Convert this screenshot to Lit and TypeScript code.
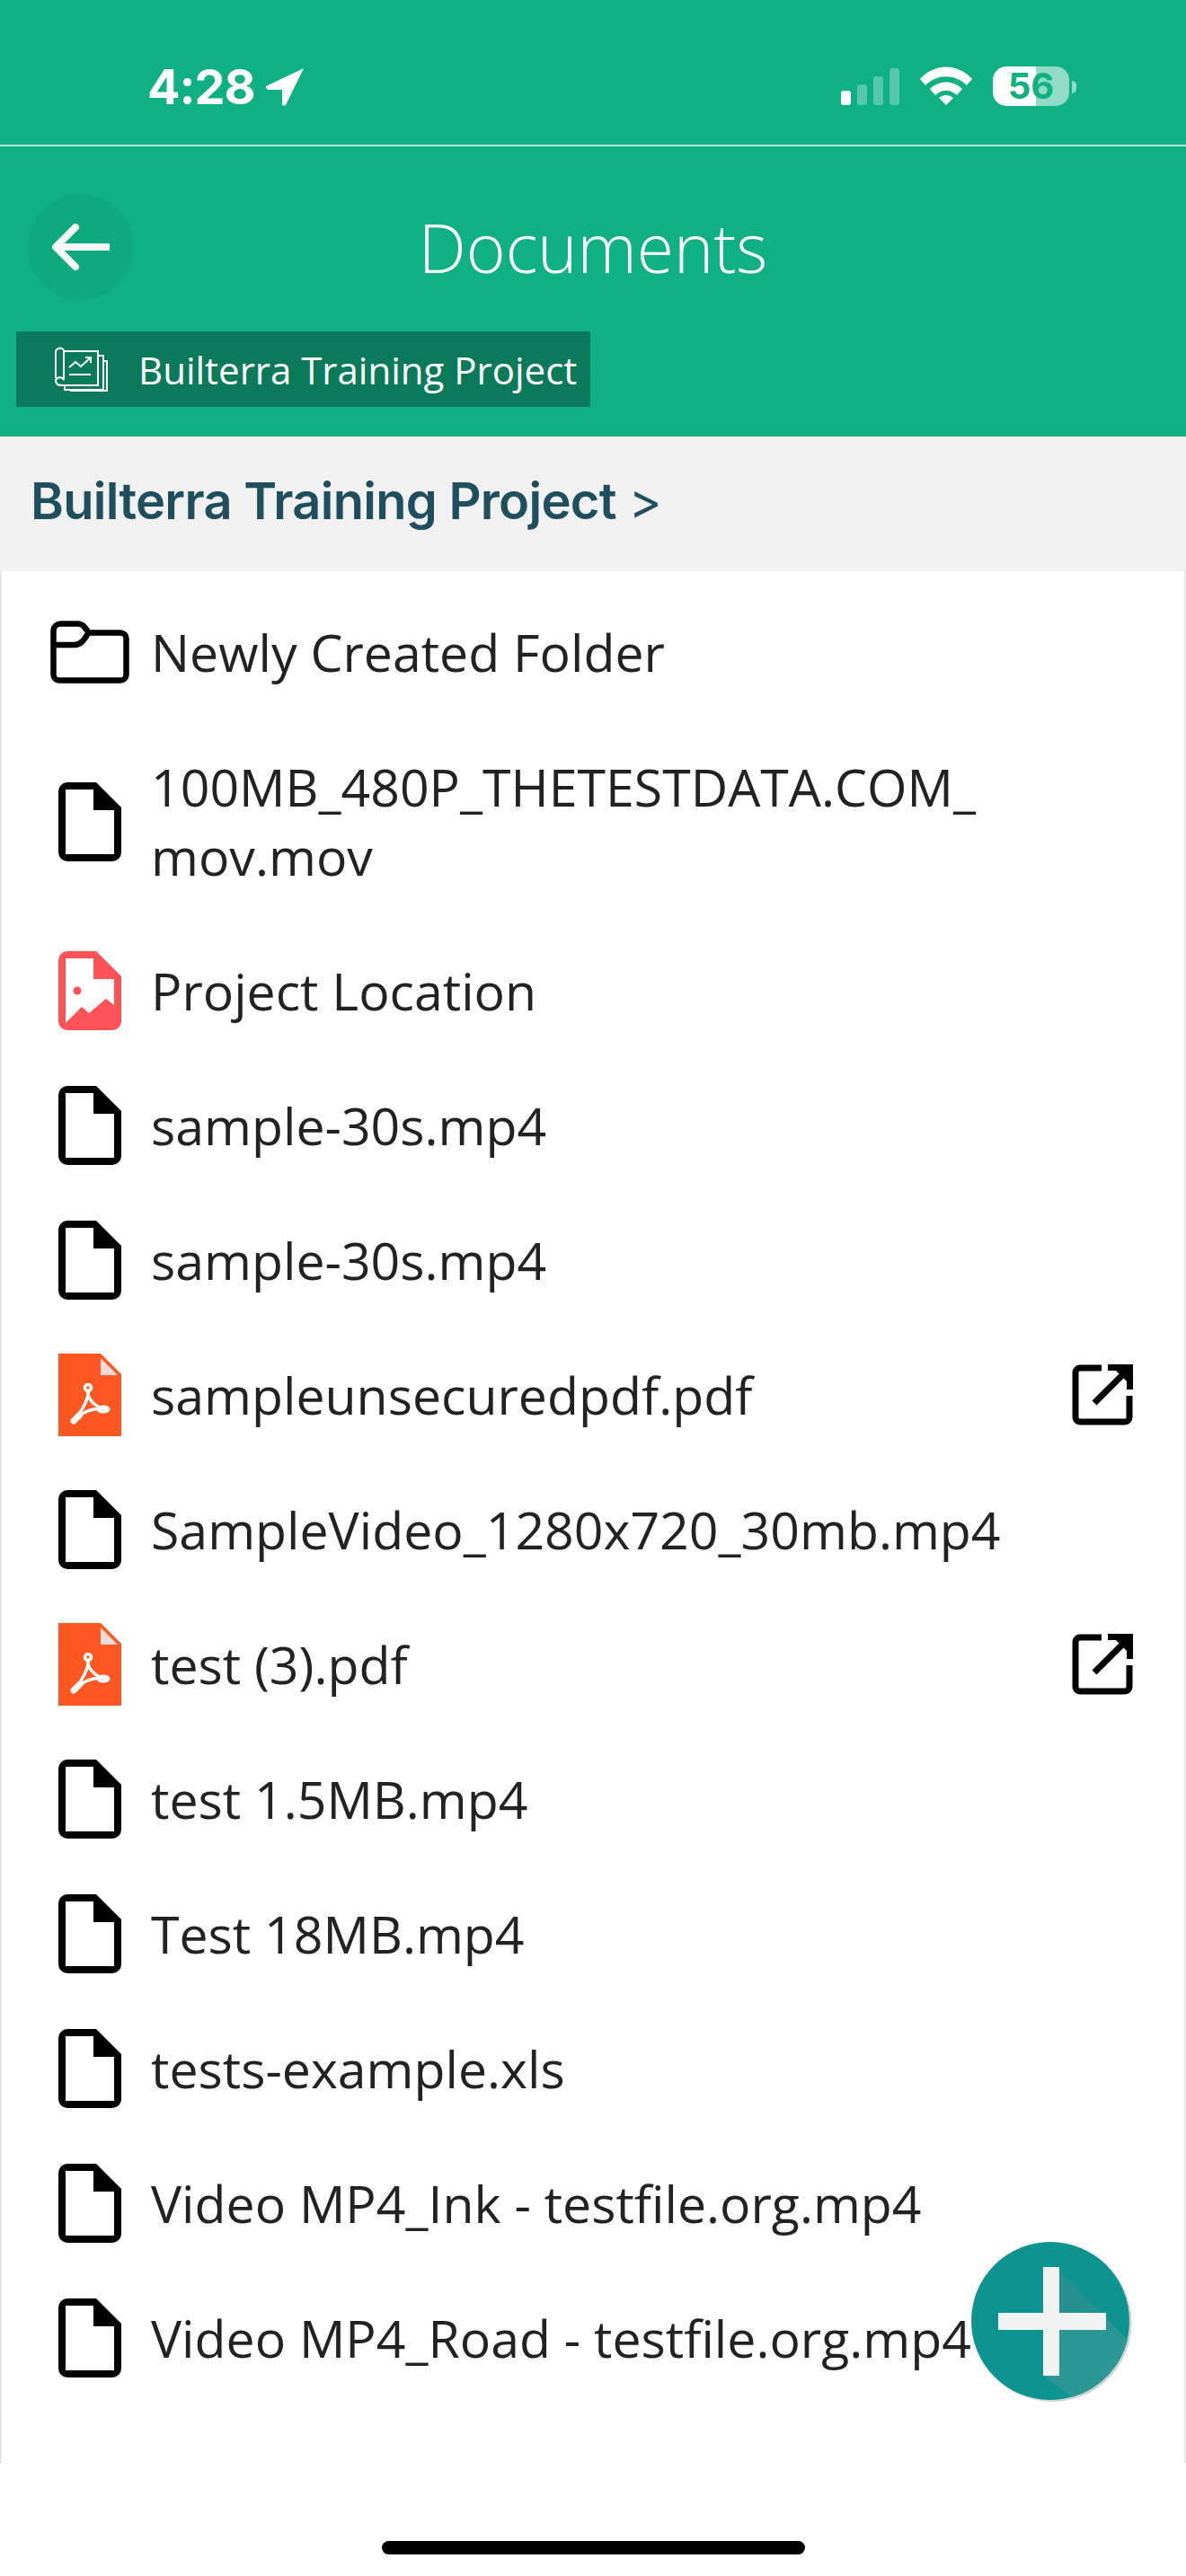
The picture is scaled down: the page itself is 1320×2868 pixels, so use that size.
import { LitElement, html, css } from "lit";
import { customElement } from "lit/decorators.js";

const outer = "M10 0H42L70 28V78A10 10 0 0 1 60 88H10A10 10 0 0 1 0 78V10A10 10 0 0 1 10 0Z";
const fileIcon = html`<svg class="ic" width="70" height="88" viewBox="0 0 70 88"><path fill-rule="evenodd" d="${outer} M8 8H39V31H62V80H8Z" fill="#000"/></svg>`;
const folderIcon = html`<svg class="ic" width="88" height="70" viewBox="0 0 88 70"><path d="M3.5 11A8 8 0 0 1 11.500 3.500H31C36 3.500 38 7 43 13.500H78A6.500 6.500 0 0 1 84.500 20V60A6.500 6.500 0 0 1 78 66.500H10A6.500 6.500 0 0 1 3.500 60Z" fill="none" stroke="#000" stroke-width="6.500" stroke-linejoin="round"/><path d="M3.500 27H27C34 27 38 21 42 14" fill="none" stroke="#000" stroke-width="6.500"/></svg>`;
const imgIcon = html`<svg class="ic" width="70" height="88" viewBox="0 0 70 88"><path fill-rule="evenodd" d="${outer} M8 8H39V31H62V60L53 53L34 69L26 62L8 80Z" fill="#ff5257"/><circle cx="21" cy="44" r="4.500" fill="#ff5257"/></svg>`;
const pdfIcon = html`<svg class="ic" width="70" height="92" viewBox="0 0 70 92"><path d="M0 0H47L70 23V92H0Z" fill="#ff5722"/><path d="M47 5L66 24H47Z" fill="#f3dcd8"/><path d="M33 40C35 48 26 65 18 74M33 40C31 50 41 60 54 63M20 72C30 63 42 60 54 62" fill="none" stroke="#fff" stroke-width="3.500"/><circle cx="33" cy="38" r="3.500" fill="none" stroke="#fff" stroke-width="3.500"/><path d="M17 75L24 68" stroke="#fff" stroke-width="7" stroke-linecap="round"/><ellipse cx="50" cy="62" rx="6" ry="3" fill="none" stroke="#fff" stroke-width="3"/></svg>`;
const extIcon = html`<svg class="ext" width="70" height="70" viewBox="0 0 70 70"><path d="M34 5H10A5 5 0 0 0 5 10V60A5 5 0 0 0 10 65H60A5 5 0 0 0 65 60V36" fill="none" stroke="#000" stroke-width="7"/><path d="M41 1H69V29H62V8H41Z" fill="#000"/><path d="M50 8H62V20Z" fill="#000"/><path d="M64 6L26 44" stroke="#000" stroke-width="7"/></svg>`;

const rows = [
  { icon: folderIcon, label: html`Newly Created Folder` },
  { icon: fileIcon, label: html`100MB_480P_THETESTDATA.COM_<br />mov.mov` },
  { icon: imgIcon, label: html`Project Location` },
  { icon: fileIcon, label: html`sample-30s.mp4` },
  { icon: fileIcon, label: html`sample-30s.mp4` },
  { icon: pdfIcon, label: html`sampleunsecuredpdf.pdf`, ext: true },
  { icon: fileIcon, label: html`SampleVideo_1280x720_30mb.mp4` },
  { icon: pdfIcon, label: html`test (3).pdf`, ext: true },
  { icon: fileIcon, label: html`test 1.5MB.mp4` },
  { icon: fileIcon, label: html`Test 18MB.mp4` },
  { icon: fileIcon, label: html`tests-example.xls` },
  { icon: fileIcon, label: html`Video MP4_Ink - testfile.org.mp4` },
  { icon: fileIcon, label: html`Video MP4_Road - testfile.org.mp4` },
];

@customElement("app-root")
export class AppRoot extends LitElement {
  static styles = css`
    :host { display: block; width: 1320px; height: 2868px; background: #fff; position: relative; overflow: hidden; font-family: "Open Sans", sans-serif; color: #222; }
    .top { background: #0fb082; height: 486px; color: #fff; display: flex; flex-direction: column; }
    .status { height: 163px; box-sizing: border-box; border-bottom: 2px solid #b5e6d6; display: flex; align-items: flex-start; padding: 74px 122px 0 164px; }
    .time { font: 700 54px/46px Inter, "Liberation Sans", sans-serif; letter-spacing: -1px; }
    .loc { margin-left: 12px; margin-top: 2px; }
    .spacer { flex: 1; }
    .signal { display: flex; align-items: flex-end; gap: 7px; height: 43px; }
    .signal i { width: 11px; border-radius: 3px; background: rgba(255,255,255,.3); }
    .wifi { margin-left: 23px; }
    .batt { margin-left: 23px; width: 85px; height: 44px; border-radius: 15px; background: linear-gradient(90deg, #fff 56%, rgba(255,255,255,.55) 56%); color: #0fb082; font: 700 40px/44px Inter, "Liberation Sans", sans-serif; text-align: center; }
    .nub { margin-left: 3px; margin-top: 16px; width: 5px; height: 14px; background: rgba(255,255,255,.55); border-radius: 0 7px 7px 0; }
    .nav { display: flex; align-items: center; height: 118px; margin-top: 53px; padding-left: 31px; }
    .back { width: 118px; height: 118px; border-radius: 50%; background: #0eaa7e; display: flex; align-items: center; justify-content: center; }
    .title { flex: 1; text-align: center; font-size: 75px; font-weight: 300; margin-left: -149px; line-height: 118px; }
    .tag { margin: 35px 0 0 18px; width: 639px; height: 84px; background: #0b7a5b; display: flex; align-items: center; box-sizing: border-box; padding-left: 42px; font-size: 42px; white-space: nowrap; }
    .tag svg { margin-right: 34px; }
    .crumb { background: #f1f1f1; height: 150px; box-sizing: border-box; padding: 0 0 6px 34px; display: flex; align-items: center; font: 600 56px Inter, "Liberation Sans", sans-serif; letter-spacing: -0.72px; color: #1f4e5f; white-space: nowrap; }
    .crumb span { font-weight: 400; margin-left: 14px; }
    .list { height: 2107px; box-sizing: border-box; padding-top: 15px; border-left: 2px solid #e6e6e6; border-right: 2px solid #e6e6e6; }
    .row { box-sizing: border-box; padding: 36.5px 0; display: flex; align-items: center; }
    .iconbox { width: 166px; height: 77px; flex: none; display: flex; align-items: center; justify-content: center; padding-left: 30px; box-sizing: border-box; }
    .label { font-size: 57.2px; line-height: 77px; white-space: nowrap; flex: 1; }
    .ext { margin: -20px 56px -20px 0; }
    .fab { position: absolute; left: 1081px; top: 2496px; }
    .home { position: absolute; left: 425px; top: 2829px; width: 471px; height: 15px; border-radius: 8px; background: #000; }
  `;

  render() {
    return html`
      <div class="top">
        <div class="status">
          <div class="time">4:28</div>
          <svg class="loc" width="42" height="42" viewBox="0 0 42 42"><path d="M42 0L0 20C0 22 1 24 3 24H18V41C18 42 21 42 22 41Z" fill="#fff"/></svg>
          <div class="spacer"></div>
          <div class="signal"><i style="height:16px;background:#fff"></i><i style="height:23px"></i><i style="height:32px"></i><i style="height:41px"></i></div>
          <svg class="wifi" width="58" height="43" viewBox="0 0 58 43"><path d="M0 14C16 -4 42 -4 58 14L52 21C39 8 19 8 6 21Z" fill="#fff"/><path d="M11 25C21 15 37 15 47 25L41 32C33 25 25 25 17 32Z" fill="#fff"/><path d="M21 35C26 31 32 31 37 35L29 43Z" fill="#fff"/></svg>
          <div class="batt">56</div>
          <div class="nub"></div>
        </div>
        <div class="nav">
          <div class="back"><svg width="64" height="52" viewBox="0 0 64 52"><path d="M62 26H6M26 4L4 26L26 48" fill="none" stroke="#f4f7f6" stroke-width="8" stroke-linecap="round" stroke-linejoin="round"/></svg></div>
          <div class="title">Documents</div>
        </div>
        <div class="tag">
          <svg width="60" height="52" viewBox="0 0 60 52" fill="none" stroke="#fff" stroke-width="2"><path d="M2 36V6A5 5 0 0 1 11 5V38A5 5 0 0 0 2 38C2 44 6 44 10 44H49V6H11"/><path d="M49 11H55V49H12V44M55 17H59V50H19V49"/><path d="M17 24L24 18L30 23L41 13M35 13H41V19M17 32H41"/></svg>
          Builterra Training Project
        </div>
      </div>
      <div class="crumb">Builterra Training Project<span>&gt;</span></div>
      <div class="list">
        ${rows.map(r => html`<div class="row"><div class="iconbox">${r.icon}</div><div class="label">${r.label}</div>${r.ext ? extIcon : ""}</div>`)}
      </div>
      <svg class="fab" width="180" height="180" viewBox="0 0 180 180">
        <circle cx="90.500" cy="90" r="88" fill="#d0d4d4"/>
        <circle cx="88" cy="88" r="88" fill="#0d9490"/>
        <path d="M98 32L174 109A88 88 0 0 1 112 172.700L80 149V98Z" fill="#2b9896"/>
        <path d="M98 32L150 84V79H98Z" fill="#25908f"/>
        <path d="M80 28H98V79H150V98H98V149H80V98H30V79H80Z" fill="#f1f3f3"/>
      </svg>
      <div class="home"></div>
    `;
  }
}
